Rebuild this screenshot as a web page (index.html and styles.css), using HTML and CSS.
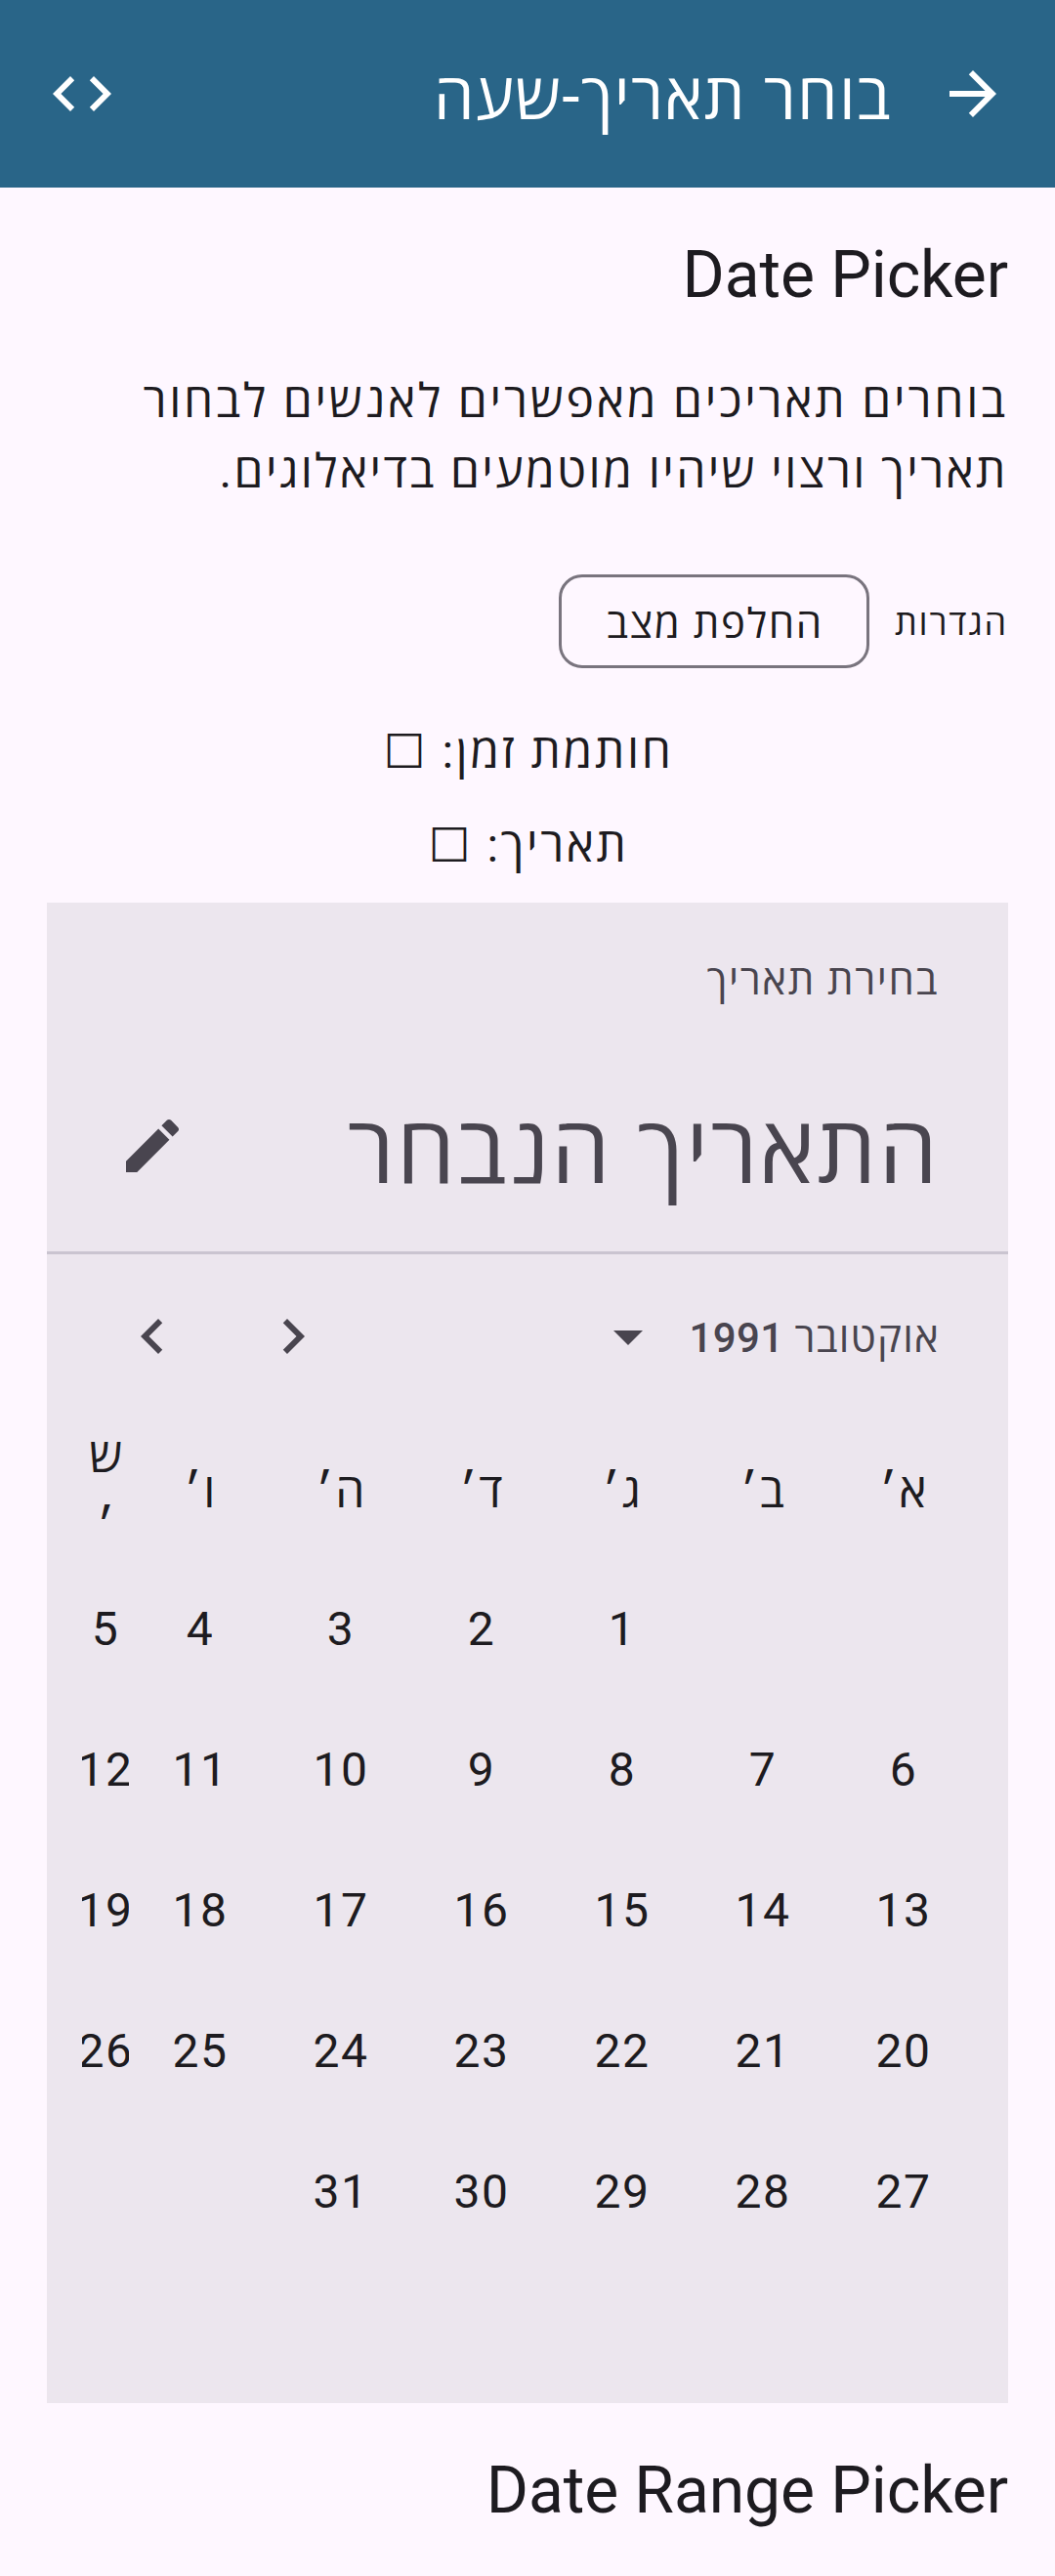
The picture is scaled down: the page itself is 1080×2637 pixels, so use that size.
FILE: index.html
```html
<!DOCTYPE html>
<html lang="he" dir="rtl">
<head>
<meta charset="utf-8">
<title>בוחר תאריך-שעה</title>
<link rel="stylesheet" href="styles.css">
</head>
<body>
<header class="app-bar">
  <svg class="icon" viewBox="0 0 24 24"><path d="M12 4l-1.41 1.41L16.17 11H4v2h12.17l-5.58 5.59L12 20l8-8z"/></svg>
  <h1 class="app-title">בוחר תאריך-שעה</h1>
  <svg class="icon" viewBox="0 0 24 24"><path d="M9.4 16.6L4.8 12l4.6-4.6L8 6l-6 6 6 6 1.4-1.4zm5.2 0l4.6-4.6-4.6-4.6L16 6l6 6-6 6-1.4-1.4z"/></svg>
</header>
<main class="content">
  <h2 class="section-title">Date Picker</h2>
  <p class="description">בוחרים תאריכים מאפשרים לאנשים לבחור תאריך ורצוי שיהיו מוטמעים בדיאלוגים.</p>
  <div class="settings">
    <span class="settings-label">הגדרות</span>
    <button class="mode-button">החלפת מצב</button>
  </div>
  <p class="value">חותמת זמן: <span class="empty">☐</span></p>
  <p class="value">תאריך: <span class="empty">☐</span></p>
  <section class="picker">
    <div class="picker-title">בחירת תאריך</div>
    <div class="picker-headline">
      <span class="headline-text">התאריך הנבחר</span>
      <svg class="icon" viewBox="0 0 24 24"><path d="M3 17.25V21h3.75L17.81 9.94l-3.75-3.75L3 17.25zM20.71 7.04c.39-.39.39-1.02 0-1.41l-2.34-2.34c-.39-.39-1.02-.39-1.41 0l-1.83 1.83 3.75 3.75 1.83-1.83z"/></svg>
    </div>
    <div class="month-row">
      <span class="month-name"><span class="month-word">אוקטובר</span> 1991</span>
      <svg class="icon drop" viewBox="0 0 24 24"><path d="M7 10l5 5 5-5z"/></svg>
      <span class="nav"><svg class="icon" viewBox="0 0 24 24"><path d="M10 6L8.59 7.41 13.17 12l-4.58 4.59L10 18l6-6z"/></svg></span>
      <span class="nav"><svg class="icon" viewBox="0 0 24 24"><path d="M15.41 7.41L14 6l-6 6 6 6 1.41-1.41L10.83 12z"/></svg></span>
    </div>
    <div class="calendar">
      <span class="weekday">א׳</span><span class="weekday">ב׳</span><span class="weekday">ג׳</span><span class="weekday">ד׳</span><span class="weekday">ה׳</span><span class="weekday">ו׳</span><span class="weekday">ש׳</span>
      <span class="day"></span><span class="day"></span><span class="day">1</span><span class="day">2</span><span class="day">3</span><span class="day">4</span><span class="day">5</span>
      <span class="day">6</span><span class="day">7</span><span class="day">8</span><span class="day">9</span><span class="day">10</span><span class="day">11</span><span class="day">12</span>
      <span class="day">13</span><span class="day">14</span><span class="day">15</span><span class="day">16</span><span class="day">17</span><span class="day">18</span><span class="day">19</span>
      <span class="day">20</span><span class="day">21</span><span class="day">22</span><span class="day">23</span><span class="day">24</span><span class="day">25</span><span class="day">26</span>
      <span class="day">27</span><span class="day">28</span><span class="day">29</span><span class="day">30</span><span class="day">31</span>
    </div>
  </section>
  <h2 class="section-title">Date Range Picker</h2>
</main>
</body>
</html>
```
FILE: styles.css
```css
* { box-sizing: border-box; }
body {
  margin: 0;
  height: 2637px;
  overflow: hidden;
  background: #fef7ff;
  color: #1d1b20;
  font-family: Roboto, "Open Sans", "Noto Sans", sans-serif;
}
h1, h2, p { margin: 0; font-weight: 400; }
.icon { width: 72px; height: 72px; fill: currentColor; flex: none; display: block; }
.app-bar {
  display: flex;
  align-items: center;
  height: 192px;
  padding: 0 48px;
  background: #296588;
  color: #fff;
}
.app-title {
  flex: 1;
  margin-right: 47px;
  padding-top: 7px;
  font-size: 66px;
  line-height: 84px;
  letter-spacing: 1.4px;
}
.content { padding: 0 48px; }
.section-title { padding-top: 48px; font-size: 66px; line-height: 84px; letter-spacing: -0.1px; }
.description {
  margin-top: 51px;
  font-size: 48px;
  line-height: 72px;
  letter-spacing: 2.4px;
}
.description::first-line { letter-spacing: 2.8px; }
.settings { display: flex; align-items: center; gap: 24px; margin-top: 69px; height: 96px; }
.settings-label { width: 118px; padding-top: 1px; font-size: 36px; letter-spacing: 1.8px; white-space: nowrap; }
.mode-button {
  width: 318px;
  height: 96px;
  padding: 5px 0 0 2px;
  border: 3px solid #79747e;
  border-radius: 24px;
  background: none;
  color: inherit;
  font: 500 42px/60px Roboto, "Open Sans", "Noto Sans", sans-serif;
  letter-spacing: 1.7px;
}
.value {
  padding: 12px 0 12px 2px;
  font-size: 48px;
  line-height: 72px;
  letter-spacing: 2.6px;
  text-align: center;
}
.settings + .value { margin-top: 38px; }
.empty { font-family: "DejaVu Sans", sans-serif; line-height: 0; }
.picker { height: 1536px; margin-top: 10px; background: #ece6ee; color: #49454f; }
.picker-title { height: 108px; padding: 50px 71px 0; font-size: 42px; line-height: 60px; letter-spacing: 1.6px; }
.picker-headline {
  display: flex;
  align-items: center;
  justify-content: space-between;
  height: 252px;
  padding: 33px 72px 0 72px;
  border-bottom: 3px solid #cac4d0;
}
.headline-text { margin-right: -2px; padding-top: 9px; font-size: 96px; line-height: 120px; letter-spacing: 2.2px; }
.month-row { display: flex; align-items: center; height: 168px; padding: 0 70px 0 36px; }
.month-name {
  flex: 1;
  padding-top: 3px;
  font-size: 42px;
  font-weight: 500;
  line-height: 60px;
  letter-spacing: 0.4px;
}
.month-word { letter-spacing: 1.2px; }
.drop { margin-left: 235px; }
.nav { display: flex; justify-content: center; width: 144px; }
.calendar {
  display: grid;
  grid-template-columns: repeat(6, 144px) 48px;
  grid-auto-rows: 144px;
  margin: 0 36px;
  color: #1d1b20;
  font-size: 48px;
  line-height: 72px;
  letter-spacing: 1.5px;
}
.weekday, .day { display: flex; align-items: center; justify-content: center; overflow: hidden; }
.day { padding-left: 2px; }
.day:nth-child(7n) { padding-left: 0; }
.weekday { padding: 5px 0 0 2px; text-align: center; word-break: break-all; }
```
